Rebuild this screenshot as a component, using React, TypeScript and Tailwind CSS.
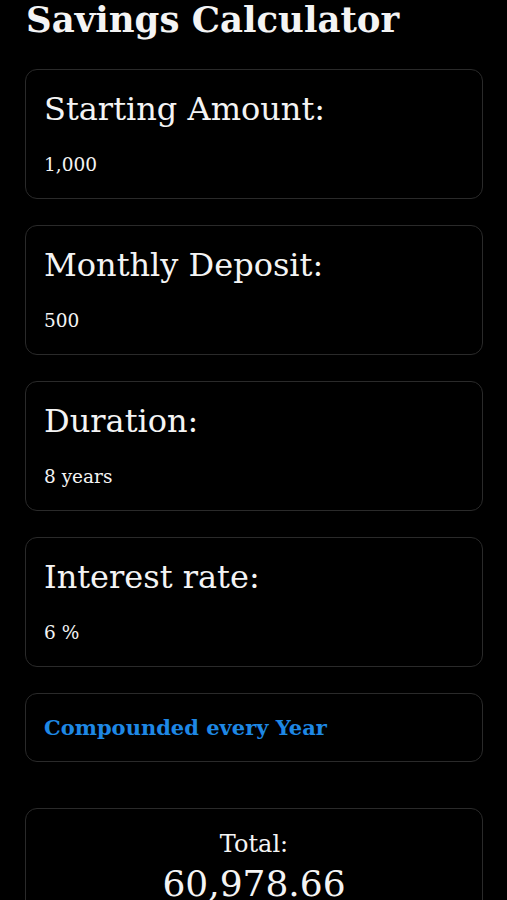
const fields = [
  { label: "Starting Amount:", value: "1,000" },
  { label: "Monthly Deposit:", value: "500" },
  { label: "Duration:", value: "8 years" },
  { label: "Interest rate:", value: "6 %" },
];

function Field({ label, value }: { label: string; value: string }) {
  return (
    <div className="rounded-xl border border-[#2a2a2a] pr-5 pl-[18px] pt-[19px] pb-[19px]">
      <div className="text-[32px] leading-[40px]">{label}</div>
      <div className="mt-[22px] text-[18.5px] leading-[28px]">{value}</div>
    </div>
  );
}

export default function App() {
  return (
    <div
      className="min-h-[900px] overflow-hidden bg-black pl-[25px] pr-[24px] text-[#f4f4f4]"
      style={{ fontFamily: '"DejaVu Serif", serif' }}
    >
      <h1 className="pl-[1px] text-[35.5px] font-bold leading-[40px]">Savings Calculator</h1>
      <div className="mt-[29px] flex flex-col gap-[26px]">
        {fields.map((f) => (
          <Field key={f.label} label={f.label} value={f.value} />
        ))}
        <div className="rounded-xl border border-[#2a2a2a] pr-5 pl-[18px] pt-5 pb-[19px]">
          <div className="text-[21px] font-bold leading-[28px] text-[#1e88e5]">Compounded every Year</div>
        </div>
      </div>
      <div className="mt-[46px] rounded-xl border border-[#2a2a2a] px-5 pt-[19px] pb-5 text-center">
        <div className="text-[24px] leading-[32px]">Total:</div>
        <div className="mt-1 text-[36px] leading-[40px]">60,978.66</div>
      </div>
    </div>
  );
}
